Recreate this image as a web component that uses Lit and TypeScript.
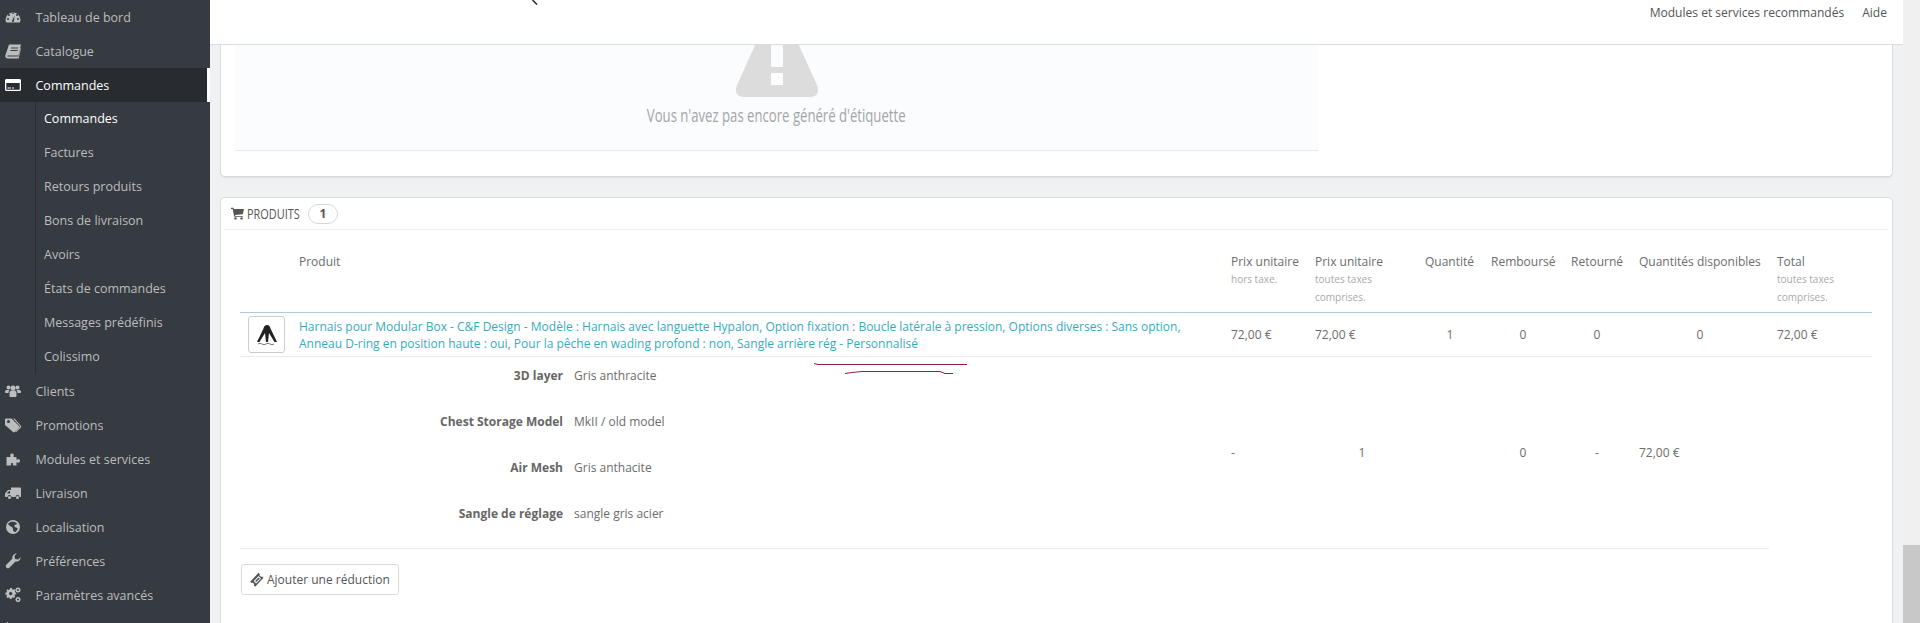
import { LitElement, html, css, svg } from "lit";
import { customElement } from "lit/decorators.js";

const ICONS: Record<string, unknown> = {
  dash: svg`<path fill-rule="evenodd" d="M0.500 11a7.500 7.500 0 1 1 15 0c0 1-.3 1.800-.8 2.500H1.300C.8 12.800.5 12 .5 11zM8 5a1 1 0 1 0 0-2 1 1 0 0 0 0 2zM4 7a1 1 0 1 0 0-2 1 1 0 0 0 0 2zM12 7a1 1 0 1 0 0-2 1 1 0 0 0 0 2zM3 11a1 1 0 1 0 0-2 1 1 0 0 0 0 2zM13 11a1 1 0 1 0 0-2 1 1 0 0 0 0 2zM7 12a1 1 0 1 0 2 0L9.500 6.500z"/>`,
  book: svg`<path fill-rule="evenodd" d="M4 1.500h12l-2.500 11H3c-.8 0-1 .8-.5 1H13.500l2-8.500.5.600-2.400 9.900H2.500C1 15.500 0 14 .3 12.500zM6 4.500v1h7l.3-1zM5.500 7v1H12.500l.3-1z"/>`,
  card: svg`<path fill-rule="evenodd" d="M1.500 2h13c.8 0 1.500.7 1.500 1.500v9c0 .8-.7 1.500-1.500 1.500h-13C.7 14 0 13.300 0 12.500v-9C0 2.700.7 2 1.500 2zM1.300 6v6.700h13.400V6zM2.500 10.500h3.500v1H2.500zM7 10.500h2v1H7z"/>`,
  users: svg`<circle cx="3.500" cy="4.500" r="2"/><circle cx="12.500" cy="4.500" r="2"/><circle cx="8" cy="5" r="2.500"/><path d="M0 9c0-1.500 1-2 2-2h2.500C3.800 8 3.500 9 3.500 10H1C.4 10 0 9.700 0 9zM16 9c0-1.500-1-2-2-2h-2.500c.7 1 1 2 1 3H15c.6 0 1-.3 1-1zM4.500 10c0-1.500 1-2.500 2-2.500h3c1 0 2 1 2 2.500v3c0 .6-.4 1-1 1h-5c-.6 0-1-.4-1-1z"/>`,
  tags: svg`<path fill-rule="evenodd" d="M0 2.500C0 2 .5 1.500 1 1.500h5.500L14 9c.5.500.5 1 0 1.500L9.500 15c-.5.500-1 .5-1.500 0L0 8zM3.500 6a1.500 1.500 0 1 0 0-3 1.500 1.500 0 0 0 0 3z"/><path d="M8 1.500h1.500L16 9c.5.500.4 1-.1 1.500L11 15.200l-.8-.7L14.700 10c.4-.4.4-.8 0-1.200z"/>`,
  puzzle: svg`<path d="M1.500 6H5c.6 0 .8-.4.500-.9C5 4.300 5 2.500 7 2.500s2 1.800 1.500 2.600c-.3.500-.1.900.5.900h2.500v2.200c0 .6.400.7.900.4.800-.5 2.600-.5 2.600 1.400s-1.800 1.900-2.600 1.400c-.5-.3-.9-.2-.9.400V14.500H8.500c-.6 0-.8-.4-.5-.9.400-.7.200-1.600-1-1.600s-1.400.9-1 1.600c.3.500.1.900-.5.900H1.500z"/>`,
  truck: svg`<path fill-rule="evenodd" d="M6 2.500h9c.6 0 1 .4 1 1V12h-1.500a2 2 0 0 0-4 0H6.500a2 2 0 0 0-4 0H1c-.6 0-1-.4-1-1V8.500l3-3.500h3zM1.800 8.500H5V6H4z"/><circle cx="4.500" cy="12.500" r="1.500"/><circle cx="12.500" cy="12.500" r="1.500"/>`,
  globe: svg`<path fill-rule="evenodd" d="M8 1a7 7 0 1 1 0 14A7 7 0 0 1 8 1zM3 5c1 1 1.500 2 3 2.500S8 9 8 10.500s1 2.500 2 2.500 2-2 2.500-3-1.500-1.500-2.500-2-1-1.500 0-2 2.500-.5 1.500-2C10 2.500 8 2.500 6.500 2.800 5 3.200 3.500 4 3 5z"/>`,
  wrench: svg`<path fill-rule="evenodd" d="M15.500 4.200c.3 2.600-2.200 5-5 4.300L4.300 14.700c-.7.700-2 .7-2.700 0l-.3-.3c-.7-.7-.7-2 0-2.700L7.500 5.500C6.800 2.700 9.200.3 11.800.5l-2.300 2.300.5 3.200 3.200.5z"/>`,
  cogs: svg`<path fill-rule="evenodd" d="M5 3h2l.3 1.500 1.200.5 1.300-.8 1.400 1.400-.8 1.300.5 1.200L12 8.400v2l-1.500.3-.5 1.200.8 1.300-1.400 1.400-1.300-.8-1.200.5L6.600 16h-2l-.3-1.500-1.200-.5-1.300.8L.4 13.400l.8-1.300-.5-1.200L-.8 10.600v-2l1.500-.3.5-1.200-.8-1.300 1.400-1.400 1.300.8 1.200-.5zM5.500 7.500a2 2 0 1 0 0 4 2 2 0 0 0 0-4z" transform="translate(1 -1.500) scale(.85)"/><circle cx="13" cy="3" r="2.500"/><circle cx="13" cy="12.500" r="2.500"/><circle cx="13" cy="3" r="1" fill="#363a41"/><circle cx="13" cy="12.500" r="1" fill="#363a41"/>`,
  stats: svg`<path d="M2 1h1v10H2zM5 4h2v7H5zM9 2h2v9H9zM13 5h2v6h-2zM1 12h15v1H1z"/>`,
  cart: svg`<path d="M0 1h3l.5 1.500H16l-1.500 6.500-9.500.8.400 1.200H14.500V12H4L2 2.500H0z"/><circle cx="5.500" cy="14" r="1.500"/><circle cx="13" cy="14" r="1.500"/>`,
  ticket: svg`<path fill-rule="evenodd" d="M9.500.8l1.400 1.400c-.5.700-.4 1.500.2 2s1.300.7 2 .2l1.400 1.400-8.300 8.900-1.400-1.400c.5-.7.4-1.500-.2-2s-1.300-.7-2-.2L1.200 9.700zM9.500 4L4.700 9.100l2.400 2.400L12 6.400z"/><path d="M9.500 5.500l1.400 1.100-3.800 3.500-1-1.100z"/>`,
};

const icon = (name: string, cls = "") =>
  html`<svg class="ico ${cls}" viewBox="0 0 16 16" fill="currentColor" aria-hidden="true">${ICONS[name]}</svg>`;

const TOP_BEFORE = [
  ["dash", "Tableau de bord"],
  ["book", "Catalogue"],
];
const SUB = [
  "Commandes",
  "Factures",
  "Retours produits",
  "Bons de livraison",
  "Avoirs",
  "États de commandes",
  "Messages prédéfinis",
  "Colissimo",
];
const TOP_AFTER = [
  ["users", "Clients"],
  ["tags", "Promotions"],
  ["puzzle", "Modules et services"],
  ["truck", "Livraison"],
  ["globe", "Localisation"],
  ["wrench", "Préférences"],
  ["cogs", "Paramètres avancés"],
];
const CUSTOM = [
  ["3D layer", "Gris anthracite"],
  ["Chest Storage Model", "MkII / old model"],
  ["Air Mesh", "Gris anthacite"],
  ["Sangle de réglage", "sangle gris acier"],
];

@customElement("app-root")
export class AppRoot extends LitElement {
  static styles = css`
    :host {
      display: flex;
      width: 1920px;
      height: 623px;
      overflow: hidden;
      position: relative;
      background: #eff1f2;
      font-family: "Open Sans", "Liberation Sans", sans-serif;
      font-size: 12px;
      color: #666;
    }
    .ico { width: 16px; height: 16px; display: block; flex: none; }

    .side { width: 210px; flex: none; background: #363a41; color: #bcbdbe; display: flex; flex-direction: column; }
    .item { height: 34px; flex: none; display: flex; align-items: center; padding-left: 5px; gap: 14.5px; box-sizing: border-box; font-size: 12.5px; }
    .item.on { background: #282b30; color: #fff; border-right: 3px solid #fff; }
    .sub { margin-left: 35px; border-left: 1px solid #2a2d32; display: flex; flex-direction: column; flex: none; }
    .sub div { height: 34px; box-sizing: border-box; display: flex; align-items: center; padding: 0 0 2px 8px; font-size: 12.5px; }
    .sub .on { color: #fff; }

    .main { flex: 1; min-width: 0; position: relative; display: flex; flex-direction: column; padding: 0 10px; }
    .top { position: absolute; z-index: 2; left: 0; right: 0; top: 0; height: 45px; box-sizing: border-box; background: #fff; border-bottom: 1px solid #d9dcdf; display: flex; justify-content: flex-end; gap: 18px; padding: 4px 16px 0 0; color: #555; font-size: 12.05px; line-height: 18px; }
    .q { position: absolute; left: 322px; top: 0; width: 8px; height: 6px; }

    .panel { background: #fff; border: 1px solid #d8dcdf; border-radius: 5px; box-shadow: 0 1px 0 #dfe2e4; flex: none; }
    .p1 { margin-top: -40px; padding: 0 14px 25px; }
    .well { width: 1083px; background: #fbfcfd; border-bottom: 1px solid #e6ebef; padding: 36px 0 22px; display: flex; flex-direction: column; align-items: center; }
    .warn { width: 84px; height: 100px; display: block; }
    .msg { margin-top: 5px; width: 258px; display: flex; justify-content: center; color: #a3a6a9; font-size: 18px; line-height: 26px; white-space: nowrap; }
    .msg span { display: block; flex: none; transform: scaleX(.73); }

    .p2 { margin-top: 20px; padding: 0 20px 60px 19px; }
    .head { margin: 0 -16px; height: 31px; border-bottom: 1px solid #eef0f1; display: flex; align-items: center; padding-left: 7px; font-size: 14px; color: #555; }
    .head .ico { width: 13px; height: 13px; margin-right: 3px; }
    .title { width: 52px; display: block; white-space: nowrap; transform: scaleX(.78); transform-origin: left center; }
    .badge { margin-left: 9px; width: 30px; height: 20px; box-sizing: border-box; border: 1px solid #d5d8da; border-radius: 10px; display: flex; align-items: center; justify-content: center; font-weight: 700; font-size: 12px; color: #555; }

    table { border-collapse: separate; border-spacing: 0; table-layout: fixed; width: 1632px; }
    th { font-weight: 400; text-align: left; vertical-align: top; padding: 22px 8px 6px; line-height: 20px; height: 54px; border-bottom: 1px solid #a9d0cd; color: #6c6c6c; }
    th small { display: block; font-size: 10px; line-height: 18px; color: #a9a9a9; margin-top: -2px; }
    td { padding: 0 8px; border-bottom: 1px solid #e9ecee; line-height: 17px; color: #6c6c6c; }
    .prod td { height: 43px; }
    .c { text-align: center; }
    .thumb { width: 37px; height: 37px; box-sizing: border-box; border: 1px solid #ccc; border-radius: 3px; display: flex; align-items: center; justify-content: center; background: #fff; }
    .thumb svg { width: 24px; height: 24px; display: block; }
    a { color: #36abc0; text-decoration: none; }
    td.custom { padding: 0; }
    .grid { display: grid; grid-template-columns: 323px 1fr; column-gap: 11px; row-gap: 26px; padding: 9px 0 24px; line-height: 20px; }
    .grid b { text-align: right; font-weight: 700; color: #666; }

    .btn { margin: 15px 0 0 1px; width: 158px; height: 31px; box-sizing: border-box; border: 1px solid #d8dbdd; border-radius: 3px; background: #fff; display: flex; align-items: center; padding-left: 7px; gap: 2px; color: #555; font-size: 12px; }

    .bar { width: 17px; flex: none; background: #f0f0f0; display: flex; flex-direction: column; justify-content: flex-end; }
    .thumbbar { height: 78px; background: #c8c8c8; }
    .scribble { position: absolute; left: 810px; top: 360px; width: 160px; height: 16px; z-index: 3; }
  `;

  render() {
    return html`
      <nav class="side">
        ${TOP_BEFORE.map(([i, t]) => html`<div class="item">${icon(i)}<span>${t}</span></div>`)}
        <div class="item on">${icon("card")}<span>Commandes</span></div>
        <div class="sub">
          ${SUB.map((t, n) => html`<div class=${n === 0 ? "on" : ""}>${t}</div>`)}
        </div>
        ${TOP_AFTER.map(([i, t]) => html`<div class="item">${icon(i)}<span>${t}</span></div>`)}
        <div class="item">${icon("stats")}</div>
      </nav>

      <div class="main">
        <header class="top">
          <svg class="q" viewBox="0 0 8 6"><path d="M0.500 0 L5 4.500" stroke="#222" stroke-width="1.400" fill="none" /></svg>
          <span>Modules et services recommandés</span>
          <span>Aide</span>
        </header>

        <section class="panel p1">
          <div class="well">
            <svg class="warn" viewBox="0 0 84 100" aria-hidden="true">
              <path fill="#dcdcdc" fill-rule="evenodd" d="M42 0 L82 88 Q86 100 75 100 H9 Q-2 100 2 88 Z M36 30 V70 H48 V30 Z M36 76 V88 H48 V76 Z" />
            </svg>
            <div class="msg"><span>Vous n'avez pas encore généré d'étiquette</span></div>
          </div>
        </section>

        <section class="panel p2">
          <div class="head">${icon("cart")}<span class="title">PRODUITS</span><span class="badge">1</span></div>
          <table>
            <colgroup>
              <col style="width:51px" /><col style="width:932px" /><col style="width:84px" /><col style="width:110px" />
              <col style="width:66px" /><col style="width:80px" /><col style="width:68px" /><col style="width:138px" /><col style="width:103px" />
            </colgroup>
            <thead>
              <tr>
                <th></th>
                <th>Produit</th>
                <th>Prix unitaire<small>hors taxe.</small></th>
                <th>Prix unitaire<small>toutes taxes<br />comprises.</small></th>
                <th>Quantité</th>
                <th>Remboursé</th>
                <th>Retourné</th>
                <th>Quantités disponibles</th>
                <th>Total<small>toutes taxes<br />comprises.</small></th>
              </tr>
            </thead>
            <tbody>
              <tr class="prod">
                <td>
                  <div class="thumb">
                    <svg viewBox="0 0 24 24" aria-hidden="true">
                      <path fill="#222" d="M12 2c2 0 3 1.500 3.500 3.500L22 19h-2.500L14 10l-1 9h-2l-1-9-5.500 9H2L8.500 5.500C9 3.500 10 2 12 2z" />
                      <path fill="none" stroke="#555" stroke-width=".8" d="M3 21q2-1.500 4 0t4 0 4 0 4 0" />
                    </svg>
                  </div>
                </td>
                <td>
                  <a href="#">Harnais pour Modular Box - C&amp;F Design - Modèle : Harnais avec languette Hypalon, Option fixation : Boucle latérale à pression, Options diverses : Sans option,<br />Anneau D-ring en position haute : oui, Pour la pêche en wading profond : non, Sangle arrière rég - Personnalisé</a>
                </td>
                <td>72,00 €</td>
                <td>72,00 €</td>
                <td class="c">1</td>
                <td class="c">0</td>
                <td class="c">0</td>
                <td class="c">0</td>
                <td>72,00 €</td>
              </tr>
              <tr>
                <td class="custom" colspan="2">
                  <div class="grid">
                    ${CUSTOM.map(([k, v]) => html`<b>${k}</b><span>${v}</span>`)}
                  </div>
                </td>
                <td>-</td>
                <td class="c">1</td>
                <td></td>
                <td class="c">0</td>
                <td class="c">-</td>
                <td>72,00 €</td>
              </tr>
            </tbody>
          </table>
          <div class="btn">${icon("ticket")}<span>Ajouter une réduction</span></div>
        </section>
      </div>

      <div class="bar"><div class="thumbbar"></div></div>

      <svg class="scribble" viewBox="0 0 160 16" aria-hidden="true">
        <path fill="none" stroke="#8e2233" stroke-width="1" d="M4 3.500 L8 4.500 H157" />
        <path fill="none" stroke="#8e2233" stroke-width="1" d="M35 13.500 L42 12.500 L52 11.500 H130 L135 13.500 H143" />
      </svg>
    `;
  }
}
